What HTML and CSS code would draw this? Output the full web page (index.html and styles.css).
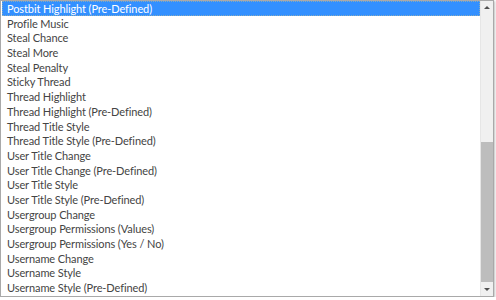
FILE: index.html
```html
<!DOCTYPE html>
<html>
<head>
<meta charset="utf-8">
<link rel="stylesheet" href="styles.css">
</head>
<body>
<div class="listbox">
  <ul class="items">
    <li class="item selected">Postbit Highlight (Pre-Defined)</li>
    <li class="item">Profile Music</li>
    <li class="item">Steal Chance</li>
    <li class="item">Steal More</li>
    <li class="item">Steal Penalty</li>
    <li class="item">Sticky Thread</li>
    <li class="item">Thread Highlight</li>
    <li class="item">Thread Highlight (Pre-Defined)</li>
    <li class="item">Thread Title Style</li>
    <li class="item">Thread Title Style (Pre-Defined)</li>
    <li class="item">User Title Change</li>
    <li class="item">User Title Change (Pre-Defined)</li>
    <li class="item">User Title Style</li>
    <li class="item">User Title Style (Pre-Defined)</li>
    <li class="item">Usergroup Change</li>
    <li class="item">Usergroup Permissions (Values)</li>
    <li class="item">Usergroup Permissions (Yes / No)</li>
    <li class="item">Username Change</li>
    <li class="item">Username Style</li>
    <li class="item">Username Style (Pre-Defined)</li>
  </ul>
  <div class="scrollbar">
    <div class="arrow up"></div>
    <div class="track"></div>
    <div class="thumb"></div>
    <div class="arrow down"></div>
  </div>
</div>
</body>
</html>
```
FILE: styles.css
```css
html, body {
  margin: 0;
  padding: 0;
  background: #ffffff;
}
.listbox {
  width: 492px;
  height: 295px;
  border: 1px solid #a9a9a9;
  display: flex;
  background: #fff;
  box-shadow: 1px 1px 2px rgba(0,0,0,0.25);
  overflow: hidden;
}
.items {
  list-style: none;
  margin: 0;
  padding: 0 0 0 1px;
  flex: 1;
  font-family: "Lato", "Noto Sans", sans-serif;
  font-size: 11px;
  letter-spacing: -0.1px;
  color: #444444;
}
.item {
  height: 14.7px;
  line-height: 15.7px;
  padding-left: 5px;
  white-space: nowrap;
}
.item.selected {
  background: #3390ff;
  color: #fff;
  outline: 1px dotted #8ab;
  outline-offset: -1px;
}
.scrollbar {
  width: 12px;
  display: flex;
  flex-direction: column;
  background: #f0f0f0;
  border-left: 1px solid #e6e6e6;
}
.arrow {
  height: 14px;
  position: relative;
}
.arrow::after {
  content: "";
  position: absolute;
  left: 3px;
  top: 5px;
  border-left: 3px solid transparent;
  border-right: 3px solid transparent;
}
.arrow.up::after {
  border-bottom: 3px solid #505050;
}
.arrow.down::after {
  border-top: 3px solid #505050;
  top: 6px;
}
.track {
  flex: 1;
}
.thumb {
  height: 140px;
  background: #bdbdbd;
}
```
